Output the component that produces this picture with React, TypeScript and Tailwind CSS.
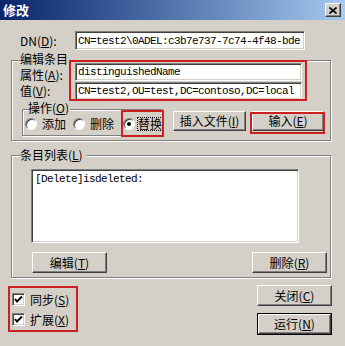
import React from "react";

const btn =
  "flex items-center justify-center whitespace-nowrap bg-[#d4d0c8] border border-t-white border-l-white border-r-[#404040] border-b-[#404040] shadow-[inset_-1px_-1px_#808080]";
const sunken =
  "bg-white border border-t-[#808080] border-l-[#808080] border-r-white border-b-white shadow-[inset_1px_1px_#404040,inset_-1px_-1px_#d4d0c8]";
const etched = "border border-[#808080] shadow-[inset_1px_1px_#ffffff,1px_1px_#ffffff]";
const mono = "font-['Liberation_Mono',monospace] text-[11px] tracking-[-0.6px] leading-[14px] whitespace-nowrap";

function K({ k }: { k: string }) {
  return (
    <span>
      (<span className="underline">{k}</span>)
    </span>
  );
}

function Radio({ checked }: { checked?: boolean }) {
  return (
    <span className="shrink-0 w-[12px] h-[12px] rounded-full bg-white border border-t-[#808080] border-l-[#808080] border-r-white border-b-white shadow-[inset_1px_1px_#404040] flex items-center justify-center">
      {checked && <span className="w-[4px] h-[4px] rounded-full bg-black" />}
    </span>
  );
}

function Check() {
  return (
    <span className={`shrink-0 w-[13px] h-[13px] ${sunken} flex items-center justify-center`}>
      <svg width="9" height="9" viewBox="0 0 9 9">
        <path d="M1 4 L3 6.5 L8 1.5" stroke="#000" strokeWidth="2" fill="none" />
      </svg>
    </span>
  );
}

export default function App() {
  return (
    <div className="w-[345px] h-[346px] bg-[#d4d0c8] relative overflow-hidden font-['Noto_Sans_CJK_SC',sans-serif] text-[12px] leading-[14px] text-black">
      {/* title bar */}
      <div className="h-[20px] flex items-center justify-between pl-[3px] pr-[4px] bg-linear-to-r from-[#0a246a] to-[#a6caf0]">
        <span className="text-white font-bold text-[13px] leading-[16px]">修改</span>
        <span className={`${btn} w-[16px] h-[14px]`}>
          <svg width="8" height="7" viewBox="0 0 8 7">
            <path d="M0.5 0.5 L7.5 6.5 M7.5 0.5 L0.5 6.5" stroke="#000" strokeWidth="1.6" />
          </svg>
        </span>
      </div>

      {/* DN row */}
      <div className="mt-[11px] flex items-center pl-[20px]">
        <span className="w-[55px] whitespace-nowrap">
          DN<K k="D" />:
        </span>
        <div className={`${sunken} w-[230px] h-[19px] flex items-center pl-[2px] overflow-hidden ${mono}`}>
          CN=test2\0ADEL:c3b7e737-7c74-4f48-bde
        </div>
      </div>

      {/* edit group */}
      <div className={`relative mt-[10px] ml-[11px] w-[320px] h-[81px] ${etched}`}>
        <span className="absolute left-[8px] top-[-8px] bg-[#d4d0c8] pr-[1px] leading-[12px] whitespace-nowrap">编辑条目</span>
        <div className="flex flex-col pt-[2px]">
          <div className="flex items-end pl-[8px] h-[18px]">
            <span className="w-[55px] leading-[12px] whitespace-nowrap">
              属性<K k="A" />:
            </span>
            <div className={`${sunken} w-[227px] h-[18px] flex items-center pl-[2px] ${mono}`}>distinguishedName</div>
          </div>
          <div className="flex items-center pl-[8px] h-[18px] mt-[1px]">
            <span className="w-[55px] leading-[12px] whitespace-nowrap">
              值<K k="V" />:
            </span>
            <div className={`${sunken} w-[227px] h-[18px] flex items-center pl-[2px] ${mono}`}>
              CN=test2,OU=test,DC=contoso,DC=local
            </div>
          </div>
          <div className="flex items-start mt-[9px] pl-[10px]">
            <div className={`relative w-[141px] h-[27px] ${etched} flex items-center pl-[2px]`}>
              <span className="absolute left-[5px] top-[-8px] bg-[#d4d0c8] pr-[1px] leading-[12px] whitespace-nowrap">
                操作<K k="O" />
              </span>
              <div className="flex items-center w-[48px] gap-[5px] mt-[3px] whitespace-nowrap leading-[12px]">
                <Radio />
                <span>添加</span>
              </div>
              <div className="flex items-center w-[50px] gap-[5px] mt-[3px] whitespace-nowrap leading-[12px]">
                <Radio />
                <span>删除</span>
              </div>
              <div className="flex items-center gap-[3px] mt-[3px] whitespace-nowrap leading-[12px]">
                <Radio checked />
                <span className="outline outline-1 outline-dotted outline-black">替换</span>
              </div>
            </div>
            <div className={`${btn} ml-[10px] mt-[2px] w-[73px] h-[20px]`}>
              插入文件<K k="I" />
            </div>
            <div className={`${btn} ml-[6px] mt-[2px] w-[72px] h-[20px]`}>
              输入<K k="E" />
            </div>
          </div>
        </div>
      </div>

      {/* list group */}
      <div className={`relative mt-[14px] ml-[11px] w-[320px] h-[123px] ${etched}`}>
        <span className="absolute left-[8px] top-[-7px] bg-[#d4d0c8] pr-[4px] leading-[12px] whitespace-nowrap">
          条目列表<K k="L" />
        </span>
        <div className="flex flex-col pt-[13px] pl-[19px]">
          <div className={`${sunken} w-[268px] h-[74px] pl-[3px] pt-[2px] ${mono}`}>[Delete]isdeleted:</div>
          <div className="flex justify-between mt-[9px] ml-[1px] mr-[3px]">
            <div className={`${btn} w-[75px] h-[21px]`}>
              编辑<K k="T" />
            </div>
            <div className={`${btn} w-[75px] h-[21px]`}>
              删除<K k="R" />
            </div>
          </div>
        </div>
      </div>

      {/* bottom */}
      <div className="flex justify-between pl-[12px] pr-[13px]">
        <div className="flex flex-col pt-[15px] gap-[7px]">
          <div className="flex items-center gap-[5px] h-[13px] whitespace-nowrap">
            <Check />
            <span>
              同步<K k="S" />
            </span>
          </div>
          <div className="flex items-center gap-[5px] h-[13px] whitespace-nowrap">
            <Check />
            <span>
              扩展<K k="X" />
            </span>
          </div>
        </div>
        <div className="flex flex-col pt-[7px] gap-[7px]">
          <div className={`${btn} w-[75px] h-[21px]`}>
            关闭<K k="C" />
          </div>
          <div className="w-[75px] h-[22px] border border-black flex">
            <div className={`${btn} flex-1`}>
              运行<K k="N" />
            </div>
          </div>
        </div>
      </div>

      {/* red annotation boxes */}
      <div className="absolute left-[69px] top-[60px] w-[238px] h-[41px] border-2 border-[#cc2020]" />
      <div className="absolute left-[121px] top-[110px] w-[43px] h-[27px] border-2 border-[#cc2020]" />
      <div className="absolute left-[250px] top-[112px] w-[75px] h-[22px] border-2 border-[#cc2020]" />
      <div className="absolute left-[8px] top-[286px] w-[70px] h-[46px] border-2 border-[#cc2020]" />
    </div>
  );
}
